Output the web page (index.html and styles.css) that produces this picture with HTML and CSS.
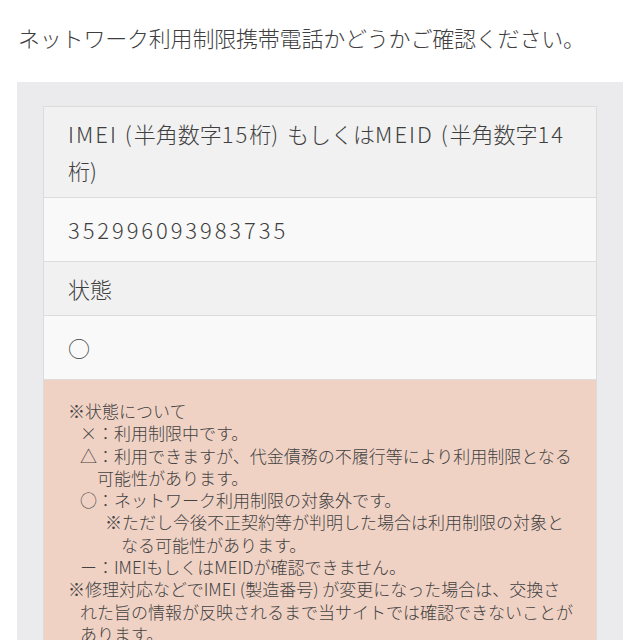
FILE: index.html
```html
<!DOCTYPE html>
<html lang="ja">
<head>
<meta charset="utf-8">
<link rel="stylesheet" href="styles.css">
</head>
<body>
<p class="lead">ネットワーク利用制限携帯電話かどうかご確認ください。</p>
<section class="panel">
  <div class="table">
    <div class="row head"><span class="lat">IMEI (</span>半角数字<span class="lat">15</span>桁<span class="lat">) </span>もしくは<span class="lat">MEID (</span>半角数字<span class="lat">14</span><br>桁)</div>
    <div class="row value num">352996093983735</div>
    <div class="row head">状態</div>
    <div class="row value">○</div>
    <div class="note">
      <div class="l0">※状態について</div>
      <div class="l1">×：利用制限中です。</div>
      <div class="l1 hang">△：利用できますが、代金債務の不履行等により利用制限となる<br>可能性があります。</div>
      <div class="l1">○：ネットワーク利用制限の対象外です。</div>
      <div class="l2 hang2">※ただし今後不正契約等が判明した場合は利用制限の対象と<br>なる可能性があります。</div>
      <div class="l1">ー：IMEIもしくはMEIDが確認できません。</div>
      <div class="l0 hang0">※修理対応などでIMEI (製造番号) が変更になった場合は、交換さ<br>れた旨の情報が反映されるまで当サイトでは確認できないことが<br>あります。</div>
    </div>
  </div>
</section>
</body>
</html>
```
FILE: styles.css
```css
html, body {
  margin: 0;
  padding: 0;
  background: #fff;
}
body {
  font-family: "Noto Sans CJK JP", "Noto Sans", sans-serif;
  font-weight: 300;
  color: #3f3f3f;
  width: 640px;
  height: 640px;
  overflow: hidden;
}
.lead {
  margin: 0;
  padding: 21px 0 0 18px;
  font-size: 22px;
  line-height: 33px;
  height: 61px;
  letter-spacing: -0.2px;
}
.panel {
  margin: 0 17px;
  background: #ebebed;
  padding: 24px 26px 0 26px;
}
.table {
  border: 1px solid #dcdcdc;
  border-bottom: none;
}
.row {
  font-size: 22px;
  line-height: 37px;
  padding: 8px 24px;
  border-bottom: 1px solid #dcdcdc;
}
.row.head {
  background: #f1f1f1;
}
.row.value {
  background: #f9f9f9;
  padding: 13px 24px;
}
.lat {
  letter-spacing: 2px;
}
.num {
  letter-spacing: 2.9px;
}
.note {
  background: #f0d2c5;
  padding: 20px 20px 20px 24px;
  font-size: 17px;
  line-height: 22.3px;
  color: #424242;
}
.l1 { padding-left: 12px; }
.l2 { padding-left: 37px; }
.hang { padding-left: 29px; text-indent: -17px; }
.hang2 { padding-left: 53px; text-indent: -16px; }
.hang0 { padding-left: 12px; text-indent: -12px; }
```
